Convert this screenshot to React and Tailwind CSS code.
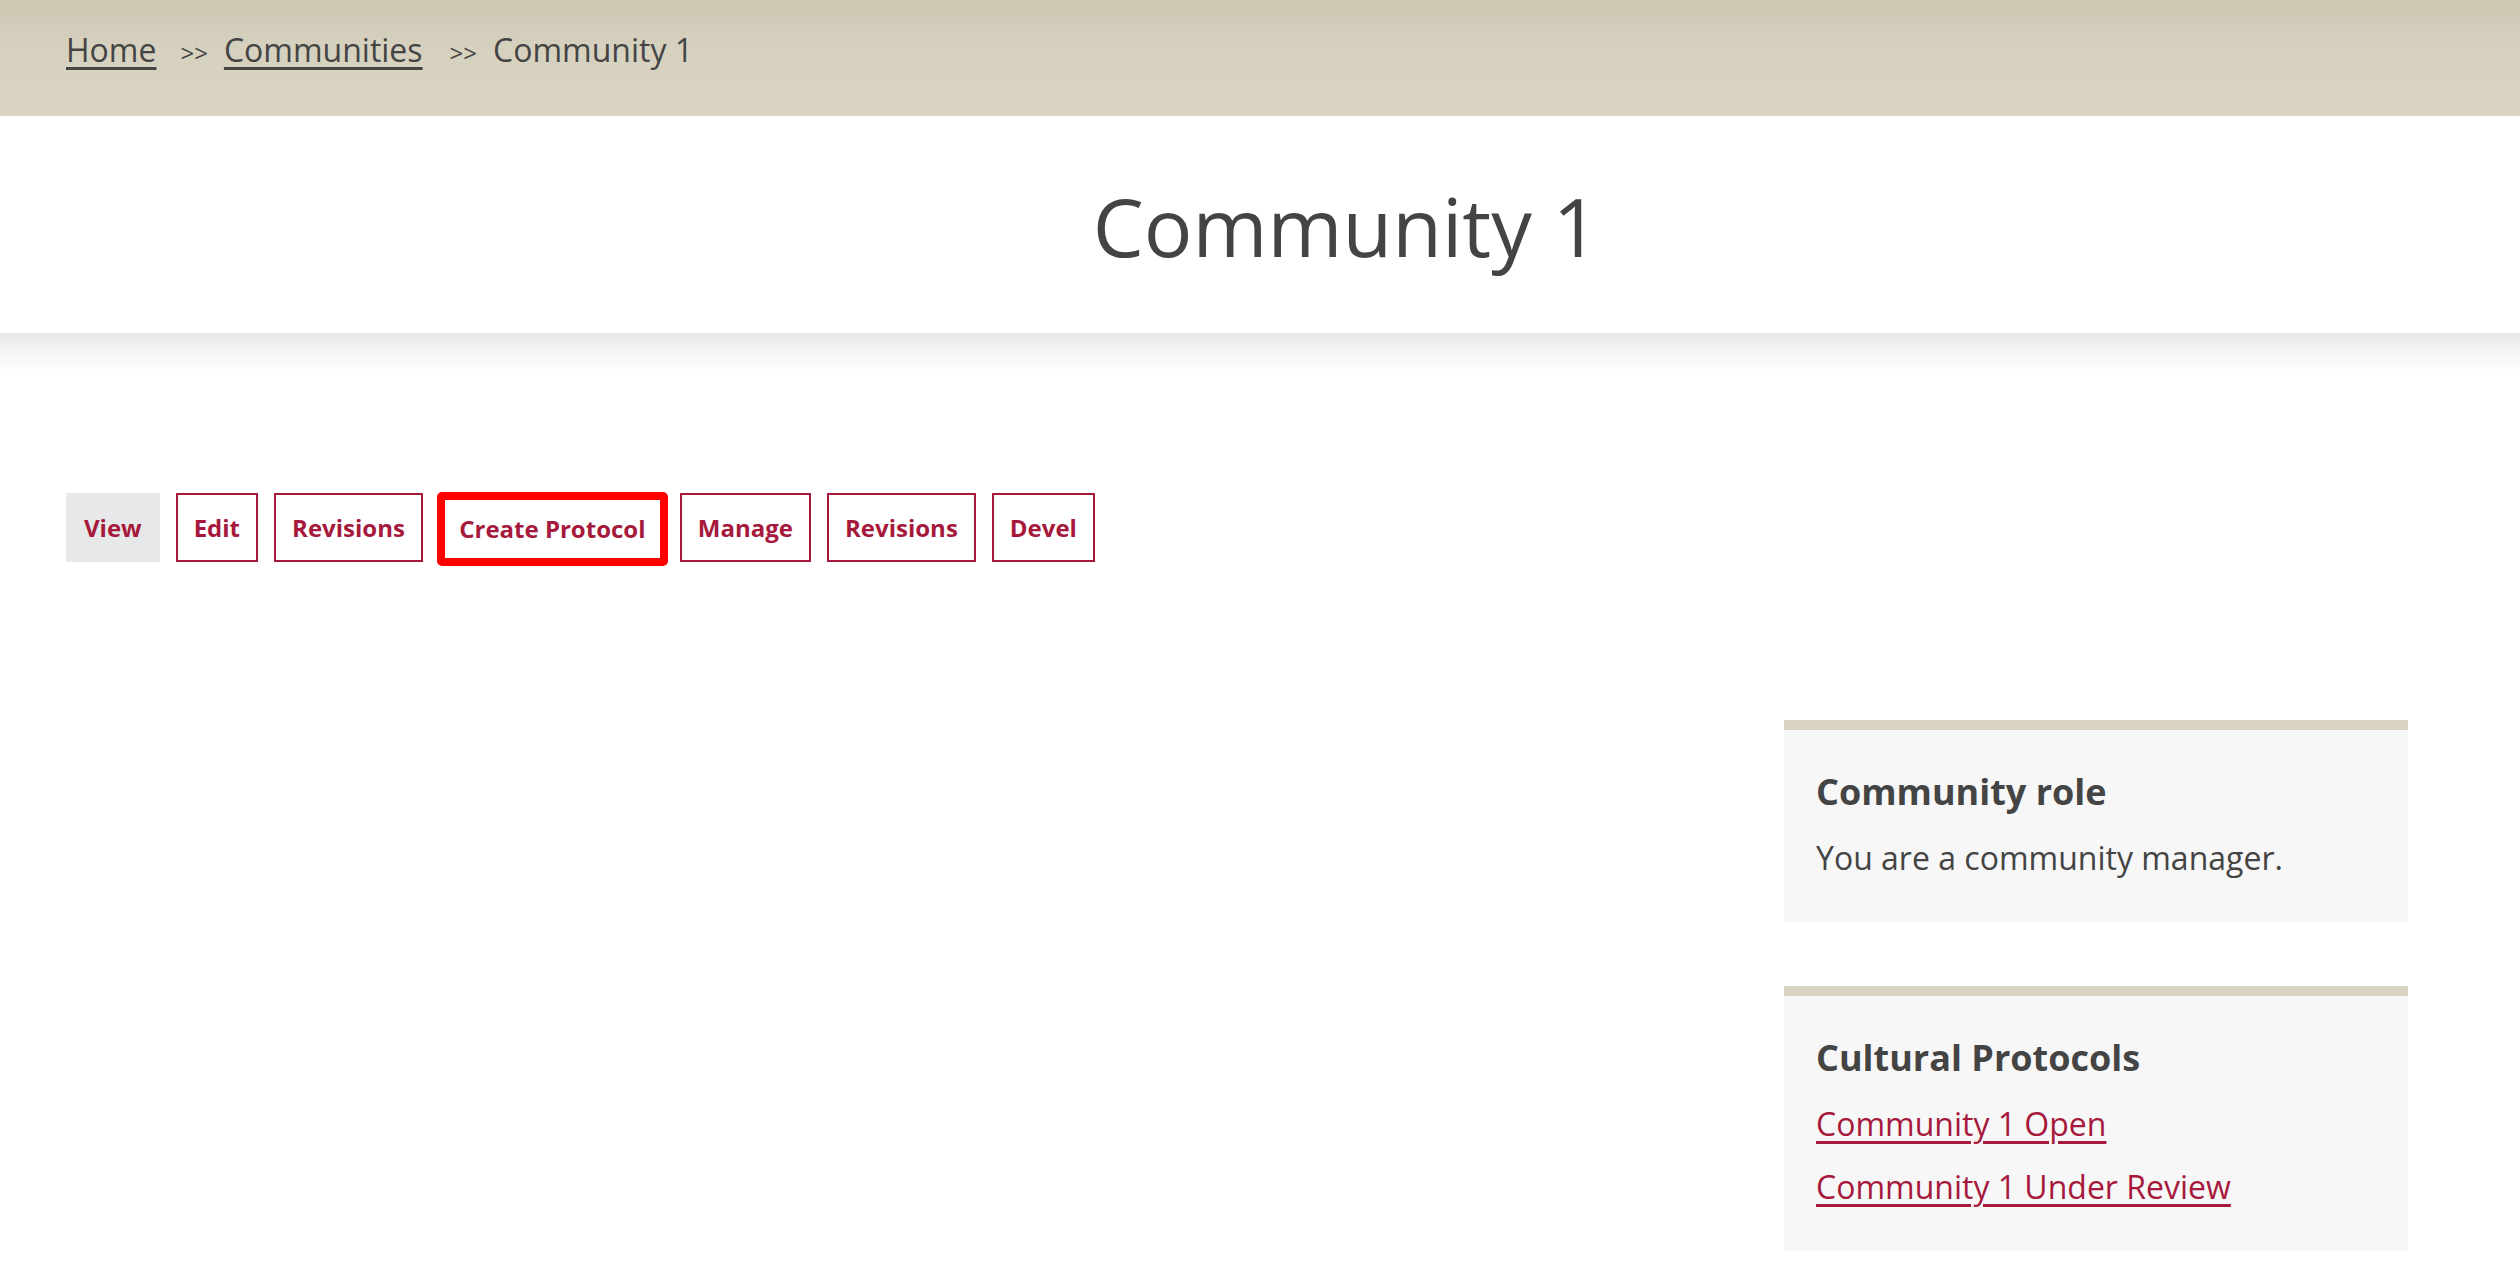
export default function App() {
  const font = { fontFamily: '"Open Sans", "Noto Sans", sans-serif' };
  const tabs = ["Edit", "Revisions"];
  const tabs2 = ["Manage", "Revisions", "Devel"];
  const tabCls =
    "h-[69px] flex items-center px-4 border-2 border-[#a6193c] text-[#a6193c] text-[24px] font-bold leading-[36px] whitespace-nowrap";
  return (
    <div className="min-h-[1288px] bg-white text-[#444]" style={font}>
      {/* Breadcrumb */}
      <div className="h-[116px] bg-linear-to-b from-[#ccc6b2] via-[#d6d1bf] via-40% to-[#dad5c3] pl-[66px] pt-[26px]">
        <nav className="flex items-baseline text-[32px] leading-[48px] text-[#444]">
          <a href="#" className="underline decoration-[3px] underline-offset-[5px]">Home</a>
          <span className="ml-[24px] mr-[16px] text-[24px]">&gt;&gt;</span>
          <a href="#" className="underline decoration-[3px] underline-offset-[5px]">Communities</a>
          <span className="ml-[27px] mr-[16px] text-[24px]">&gt;&gt;</span>
          <span>Community 1</span>
        </nav>
      </div>

      {/* Title */}
      <header className="bg-white pt-[62px] pb-[59px] flex justify-center pl-[172px]">
        <h1 className="text-[81px] leading-[96px] font-normal text-[#444]">Community 1</h1>
      </header>
      <div className="h-[45px] bg-linear-to-b from-[#e7e9e9] via-[#f6f7f6] via-50% to-white"></div>

      <div className="pl-[66px] pr-[112px]">
        {/* Tabs */}
        <div className="mt-[115px] flex items-start">
          <a href="#" className="h-[69px] flex items-center px-[18px] bg-[#e6e8e9] text-[#a6193c] text-[24px] font-bold leading-[36px]">View</a>
          {tabs.map((t, i) => (
            <a key={i} href="#" className={tabCls + " ml-4"}>{t}</a>
          ))}
          <a
            href="#"
            className="ml-[14px] mr-[-4px] -mt-px -mb-[4px] w-[231px] h-[74px] flex items-center justify-center border-[8px] border-[#ff0000] rounded-[5px] text-[#a6193c] text-[24px] font-bold leading-[36px] whitespace-nowrap"
          >
            Create Protocol
          </a>
          {tabs2.map((t, i) => (
            <a key={i} href="#" className={tabCls + " ml-4"}>{t}</a>
          ))}
        </div>

        {/* Content row */}
        <div className="mt-[158px] flex">
          <main className="flex-1"></main>
          <aside className="w-[624px] flex flex-col gap-[64px]">
            <section className="bg-[#f7f7f7] border-t-[10px] border-[#d9d3c1] px-8 pt-[35px] pb-[40px]">
              <h2 className="text-[36px] leading-[54px] font-bold text-[#444]">Community role</h2>
              <p className="mt-[15px] text-[32px] leading-[48px] text-[#444]">You are a community manager.</p>
            </section>
            <section className="bg-[#f7f7f7] border-t-[10px] border-[#d9d3c1] px-8 pt-[35px] pb-[40px]">
              <h2 className="text-[36px] leading-[54px] font-bold text-[#444]">Cultural Protocols</h2>
              <ul className="text-[32px] leading-[48px]">
                <li className="mt-[15px]">
                  <a href="#" className="text-[#a6193c] underline decoration-[3px] underline-offset-[5px]">Community 1 Open</a>
                </li>
                <li className="mt-[15px]">
                  <a href="#" className="text-[#a6193c] underline decoration-[3px] underline-offset-[5px]">Community 1 Under Review</a>
                </li>
              </ul>
            </section>
          </aside>
        </div>
      </div>
    </div>
  );
}
